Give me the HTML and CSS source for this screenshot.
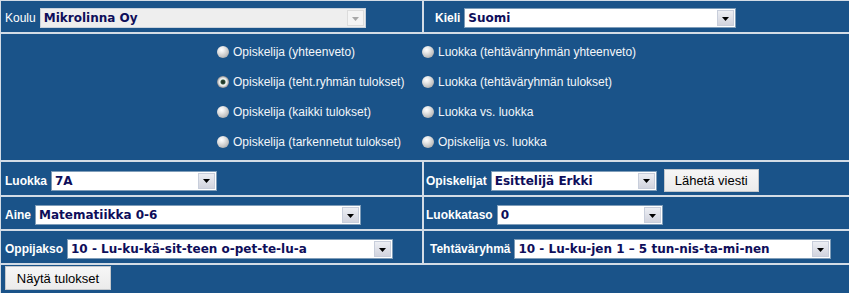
FILE: index.html
```html
<!DOCTYPE html>
<html lang="fi">
<head>
<meta charset="utf-8">
<title>Raportit</title>
<link rel="stylesheet" href="styles.css">
</head>
<body>
<div class="form">
  <div class="cell top left pad-l4">
    <span class="lbl lbl-normal">Koulu</span>
    <div class="sel sel-disabled w-long"><span class="val">Mikrolinna Oy</span><span class="arr"><svg width="7" height="4" viewBox="0 0 7 4"><polygon points="0,0 7,0 3.5,4"/></svg></span></div>
  </div>
  <div class="cell top right pad-l11">
    <span class="lbl">Kieli</span>
    <div class="sel w-kieli"><span class="val">Suomi</span><span class="arr"><svg width="7" height="4" viewBox="0 0 7 4"><polygon points="0,0 7,0 3.5,4"/></svg></span></div>
  </div>

  <div class="cell span radios">
    <div class="radio-grid">
      <label class="opt"><span class="rb"></span>Opiskelija (yhteenveto)</label>
      <label class="opt"><span class="rb"></span>Luokka (tehtävänryhmän yhteenveto)</label>
      <label class="opt"><span class="rb rb-on"></span>Opiskelija (teht.ryhmän tulokset)</label>
      <label class="opt"><span class="rb"></span>Luokka (tehtäväryhmän tulokset)</label>
      <label class="opt"><span class="rb"></span>Opiskelija (kaikki tulokset)</label>
      <label class="opt"><span class="rb"></span>Luokka vs. luokka</label>
      <label class="opt"><span class="rb"></span>Opiskelija (tarkennetut tulokset)</label>
      <label class="opt"><span class="rb"></span>Opiskelija vs. luokka</label>
    </div>
  </div>

  <div class="cell left pad-l4">
    <span class="lbl">Luokka</span>
    <div class="sel w-short"><span class="val">7A</span><span class="arr"><svg width="7" height="4" viewBox="0 0 7 4"><polygon points="0,0 7,0 3.5,4"/></svg></span></div>
  </div>
  <div class="cell right pad-l2">
    <span class="lbl">Opiskelijat</span>
    <div class="sel w-short"><span class="val">Esittelijä Erkki</span><span class="arr"><svg width="7" height="4" viewBox="0 0 7 4"><polygon points="0,0 7,0 3.5,4"/></svg></span></div>
    <button class="btn btn-send" type="button">Lähetä viesti</button>
  </div>

  <div class="cell left pad-l4">
    <span class="lbl">Aine</span>
    <div class="sel w-long"><span class="val">Matematiikka 0-6</span><span class="arr"><svg width="7" height="4" viewBox="0 0 7 4"><polygon points="0,0 7,0 3.5,4"/></svg></span></div>
  </div>
  <div class="cell right pad-l2">
    <span class="lbl">Luokkataso</span>
    <div class="sel w-short2"><span class="val">0</span><span class="arr"><svg width="7" height="4" viewBox="0 0 7 4"><polygon points="0,0 7,0 3.5,4"/></svg></span></div>
  </div>

  <div class="cell left pad-l4">
    <span class="lbl">Oppijakso</span>
    <div class="sel w-long"><span class="val">10 - Lu-ku-kä-sit-teen o-pet-te-lu-a</span><span class="arr"><svg width="7" height="4" viewBox="0 0 7 4"><polygon points="0,0 7,0 3.5,4"/></svg></span></div>
  </div>
  <div class="cell right pad-l6">
    <span class="lbl">Tehtäväryhmä</span>
    <div class="sel w-teht"><span class="val">10 - Lu-ku-jen 1 – 5 tun-nis-ta-mi-nen</span><span class="arr"><svg width="7" height="4" viewBox="0 0 7 4"><polygon points="0,0 7,0 3.5,4"/></svg></span></div>
  </div>

  <div class="cell span last">
    <button class="btn btn-show" type="button">Näytä tulokset</button>
  </div>
</div>
</body>
</html>
```

FILE: styles.css
```css
html, body {
  margin: 0;
  padding: 0;
}

body {
  background: #1a5389;
  color: #ffffff;
  font-family: "Liberation Sans", Arial, sans-serif;
  font-size: 12px;
  overflow: hidden;
}

.form {
  display: grid;
  grid-template-columns: 423px 1fr;
  grid-template-rows: 33px 128px 35px 34px 34px 40px;
}

.cell {
  box-sizing: border-box;
  border: 1px solid #d3dce6;
  display: flex;
  align-items: center;
  gap: 3px;
  padding-top: 4px;
}

.cell.top {
  padding-top: 3px;
}

.cell.right {
  border-right: none;
}

.cell.span {
  grid-column: 1 / span 2;
  border-right: none;
}

.pad-l2 { padding-left: 2px; }
.pad-l4 { padding-left: 4px; }
.pad-l6 { padding-left: 6px; }
.pad-l11 { padding-left: 11px; }

.lbl {
  font-weight: bold;
  color: #ffffff;
  white-space: nowrap;
}

.lbl-normal {
  font-weight: normal;
}

/* select look-alike */
.sel {
  box-sizing: border-box;
  display: flex;
  align-items: stretch;
  height: 20px;
  border: 1px solid #7f9db9;
  background: #ffffff;
  color: #0e0e5a;
  font-family: "DejaVu Sans", Verdana, sans-serif;
  font-weight: bold;
  font-size: 12px;
  margin-left: 1px;
}

.sel .val {
  flex: 1;
  padding-left: 3px;
  line-height: 18px;
  white-space: nowrap;
  overflow: hidden;
}

.sel .arr {
  box-sizing: border-box;
  width: 17px;
  margin: 1px;
  border: 1px solid #c8cedb;
  background: linear-gradient(#eceef3, #d2d4de);
  display: flex;
  align-items: center;
  justify-content: center;
}

.sel .arr svg {
  fill: #000000;
  margin-top: 1px;
}

.sel-disabled {
  background: #eeeeee;
  border-color: #c9d2dc;
}

.sel-disabled .arr {
  background: #f4f4f4;
  border-color: #dcdcdc;
}

.sel-disabled .arr svg {
  fill: #a8a8a8;
}

.w-long { width: 326px; }
.w-kieli { width: 272px; }
.w-short { width: 166px; }
.w-short2 { width: 166px; }
.w-teht { width: 317px; }

/* buttons */
.btn {
  box-sizing: border-box;
  font-family: "Liberation Sans", Arial, sans-serif;
  font-size: 13px;
  color: #000000;
  background: linear-gradient(#f6f6f6, #ebebeb);
  border: 1px solid #c4c8cc;
  border-radius: 0;
  padding: 0;
  margin: 0;
}

.btn-send {
  width: 95px;
  height: 23px;
  margin-left: 4px;
}

.btn-show {
  width: 106px;
  height: 24px;
}

.cell.last {
  align-items: flex-start;
  padding-top: 1px;
  padding-left: 4px;
  border-bottom: none;
}

/* radios */
.cell.radios {
  display: block;
  padding: 0;
}

.radio-grid {
  display: grid;
  grid-template-columns: 205px auto;
  grid-auto-rows: 30px;
  padding: 3px 0 0 216px;
}

.opt {
  display: flex;
  align-items: center;
  gap: 4px;
  color: #f3f6f9;
  white-space: nowrap;
}

.rb {
  width: 12px;
  height: 12px;
  border-radius: 50%;
  flex: none;
  background: radial-gradient(circle at 38% 32%, #ffffff 0, #eeeeee 22%, #c4c4c4 62%, #8e8e8e 100%);
}

.rb-on {
  background: radial-gradient(circle at 50% 50%, #1c2c22 0, #2c4a38 2px, #cfe0d6 2.8px, #f2f2f2 3.6px, #c4c4c4 4.8px, #8e8e8e 6px);
}
```
